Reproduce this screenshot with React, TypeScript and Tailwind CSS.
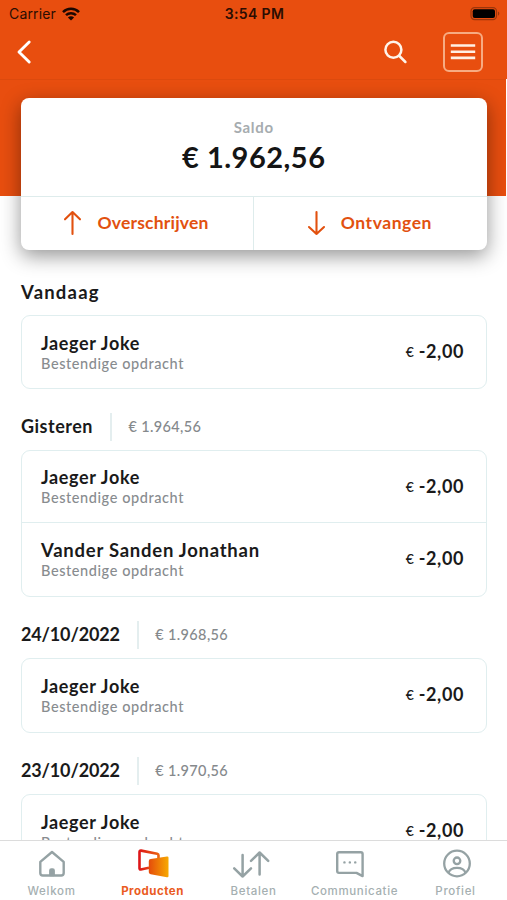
import React from "react";

type Transaction = { name: string; kind: string; amount: string; nameClass: string };
type Day = { label: string; balance?: string; heading: string; labelClass: string; items: Transaction[] };

const joke: Transaction = { name: "Jaeger Joke", kind: "Bestendige opdracht", amount: "-2,00", nameClass: "text-[18px] tracking-[0.65px]" };
const vander: Transaction = { name: "Vander Sanden Jonathan", kind: "Bestendige opdracht", amount: "-2,00", nameClass: "text-[18.5px] tracking-[0.75px]" };

const days: Day[] = [
  { label: "Vandaag", heading: "h-[44px]", labelClass: "text-[18.5px] tracking-[1.2px]", items: [joke] },
  { label: "Gisteren", balance: "€ 1.964,56", heading: "h-[46px]", labelClass: "text-[18px] tracking-[0.5px]", items: [joke, vander] },
  { label: "24/10/2022", balance: "€ 1.968,56", heading: "h-[47px]", labelClass: "text-[18px] tracking-[-0.15px]", items: [joke] },
  { label: "23/10/2022", balance: "€ 1.970,56", heading: "h-[47px]", labelClass: "text-[18px] tracking-[-0.15px]", items: [joke] },
];

function StatusBar() {
  return (
    <div className="grid h-[27px] grid-cols-3 items-center pl-[9px] pr-[7px] font-['Inter',sans-serif] text-[14px] text-[#2b0d02]">
      <div className="flex items-center gap-[6px]">
        <span className="tracking-[0.15px]">Carrier</span>
        <svg width="18" height="14" viewBox="0 0 18 14" fill="none" stroke="#1c0701" strokeWidth="2.5">
          <path d="M1 5.1C5.4.7 12.6.7 17 5.1" />
          <path d="M4 8.2c2.8-2.7 7.2-2.7 10 0" />
          <path d="M9 13.6 5.9 10.5c1.7-1.6 4.5-1.6 6.2 0Z" fill="#1c0701" stroke="none" />
        </svg>
      </div>
      <span className="text-center font-semibold tracking-[0.35px]">3:54 PM</span>
      <svg className="justify-self-end" width="31" height="14" viewBox="0 0 31 14">
        <rect x="2" y="0.6" width="25.5" height="12" rx="3.6" fill="none" stroke="#9c360b" strokeWidth="1.2" />
        <rect x="3.7" y="2.2" width="22.3" height="8.8" rx="2" fill="#000" />
        <path d="M29 4.6c1.8.7 1.8 3.5 0 4.2Z" fill="#9c360b" />
      </svg>
    </div>
  );
}

function Header() {
  return (
    <header className="h-[79px] shrink-0 bg-[#e84e0f]">
      <StatusBar />
      <div className="flex h-[50px] items-center pl-[16px] pr-[24px]">
        <svg width="16" height="26" viewBox="0 0 16 26" fill="none" stroke="#fff" strokeWidth="2.9" strokeLinecap="round" strokeLinejoin="round">
          <path d="M13.2 3 3 13 13.2 23" />
        </svg>
        <svg className="ml-auto" width="26" height="26" viewBox="0 0 26 26" fill="none" stroke="#fff4ea" strokeWidth="2.5" strokeLinecap="round">
          <circle cx="10.4" cy="10.7" r="8" />
          <path d="m16.4 17 6 6" />
        </svg>
        <div className="ml-[34px] flex h-[40px] w-[40px] items-center justify-center rounded-[6px] border-2 border-[#f7ab82]">
          <svg width="26" height="18" viewBox="0 0 26 18" stroke="#fff0e4" strokeWidth="2.6">
            <path d="M.8 2.5h24.4M.8 8.7h24.4M.8 14.9h24.4" />
          </svg>
        </div>
      </div>
    </header>
  );
}

function BalanceCard() {
  return (
    <div className="h-[117px] shrink-0 pr-[1.5px]">
      <div className="h-full border-t border-[#dc4a0e] bg-[#e84e0f] pl-[20.5px] pr-[18.5px] pt-[18.4px]">
        <div className="flex h-[151.6px] flex-col overflow-hidden rounded-[8px] bg-white shadow-[0_6px_20px_rgba(0,0,0,0.42)]">
          <div className="flex h-[98.4px] flex-col items-center border-b border-[#deecec] pt-[20px]">
            <span className="text-[15px] font-bold leading-[19px] tracking-[0.7px] text-[#a6acaf]">Saldo</span>
            <span className="mt-[2px] text-[29px] font-bold leading-[36px] tracking-[0.5px] text-[#151515]">€ 1.962,56</span>
          </div>
          <div className="grid flex-1 grid-cols-2 text-[17.5px] font-bold text-[#e2510f]">
            <div className="flex items-center border-r border-[#deecec] pl-[42px]">
              <Arrow />
              <span className="ml-[16px] tracking-[0.2px]">Overschrijven</span>
            </div>
            <div className="flex items-center pl-[53px]">
              <Arrow down />
              <span className="ml-[15px] tracking-[0.55px]">Ontvangen</span>
            </div>
          </div>
        </div>
      </div>
    </div>
  );
}

function Arrow({ down = false }: { down?: boolean }) {
  return (
    <svg width="19" height="26" viewBox="0 0 19 26" fill="none" stroke="currentColor" strokeWidth="2.1" strokeLinecap="round" strokeLinejoin="round">
      {down ? <path d="M9.5 2v22M2 17l7.5 7 7.5-7" /> : <path d="M9.5 24V2M2 9.3 9.5 2l7.5 7.3" />}
    </svg>
  );
}

function DaySection({ day }: { day: Day }) {
  return (
    <section className="mb-[14.7px]">
      <div className={"flex items-center " + day.heading}>
        <h2 className={"font-bold text-[#1a1a1a] " + day.labelClass}>{day.label}</h2>
        {day.balance && (
          <>
            <span className="ml-[17px] h-[28px] w-[2px] bg-[#e4eeef]" />
            <span className="ml-[16.5px] text-[14.5px] font-medium tracking-[0.35px] text-[#85898c]">{day.balance}</span>
          </>
        )}
      </div>
      <div className="divide-y divide-[#e0eeef] rounded-[9px] border-[1.5px] border-[#e0eeef]">
        {day.items.map((t) => (
          <div key={t.name} className="flex h-[72.3px] items-center justify-between pl-[19px] pr-[22px]">
            <div className="pt-px">
              <p className={"font-bold leading-[22px] text-[#1a1a1a] " + t.nameClass}>{t.name}</p>
              <p className="text-[14.5px] font-medium leading-[20px] tracking-[0.58px] text-[#888c8f]">{t.kind}</p>
            </div>
            <p className="flex items-center pb-px text-[#1a1a1a]">
              <span className="mr-[5px] text-[14px] font-medium">€</span>
              <span className="text-[18px] font-bold tracking-[0.6px]">{t.amount}</span>
            </p>
          </div>
        ))}
      </div>
    </section>
  );
}

function HomeIcon() {
  return (
    <svg width="32" height="32" viewBox="0 0 32 32" fill="none" stroke="#95a2a4" strokeWidth="2.4" strokeLinejoin="round">
      <path d="M4.3 14.8 16 5l11.7 9.8V26q0 2.5-2.5 2.5H6.8q-2.5 0-2.5-2.5Z" />
      <path d="M14.3 28v-4.5q0-1 1-1h1.4q1 0 1 1V28Z" fill="#95a2a4" />
    </svg>
  );
}

function ProductsIcon() {
  return (
    <svg width="34" height="32" viewBox="0 0 34 32" fill="none">
      <defs>
        <linearGradient id="front" x1="12" y1="20" x2="33" y2="20" gradientUnits="userSpaceOnUse">
          <stop stopColor="#e4480c" />
          <stop offset="1" stopColor="#f8ac00" />
        </linearGradient>
        <linearGradient id="back" x1="2" y1="10" x2="23" y2="10" gradientUnits="userSpaceOnUse">
          <stop stopColor="#dc1018" />
          <stop offset="1" stopColor="#ec6511" />
        </linearGradient>
      </defs>
      <path d="M13 20.8 4.8 22.5Q3.5 22.7 3.5 21.3V5q0-1.7 1.7-1.4l16 3.1q1.3.3 1.3 1.5v3" stroke="url(#back)" strokeWidth="2.6" />
      <path d="M12.8 14q0-1.8 1.9-2L31 9.4q1.5-.2 1.5 1.2v18.5q0 1.5-1.5 1.2l-16.3-3q-1.9-.4-1.9-2Z" fill="url(#front)" />
    </svg>
  );
}

function PayIcon() {
  return (
    <svg className="-ml-[6px]" width="40" height="32" viewBox="0 0 40 32" fill="none" stroke="#95a2a4" strokeWidth="2.5" strokeLinecap="round" strokeLinejoin="round">
      <path d="M11.6 8v21.5M3.2 21.3l8.4 8.2 8.4-8.2" />
      <path d="M28.6 27.5V5.5M20 13.8l8.6-8.3 8.6 8.3" />
    </svg>
  );
}

function ChatIcon() {
  return (
    <svg className="-ml-[9px]" width="32" height="32" viewBox="0 0 32 32" fill="none" stroke="#95a2a4" strokeWidth="2.4" strokeLinejoin="round">
      <path d="M5 5.2h21.8q1.8 0 1.8 1.8v22.1l-6.1-3.2H5q-1.8 0-1.8-1.8V7q0-1.8 1.8-1.8Z" />
      <path d="M10.4 15.4h.1M15.8 15.4h.1M21.2 15.4h.1" strokeLinecap="round" />
    </svg>
  );
}

function ProfileIcon() {
  return (
    <svg className="ml-[2px]" width="32" height="32" viewBox="0 0 32 32" fill="none" stroke="#95a2a4" strokeWidth="2.3">
      <circle cx="16" cy="16.5" r="12.8" />
      <circle cx="16" cy="13.8" r="3.3" />
      <path d="M7.5 25.9c1.2-3.6 4.4-5 8.5-5s7.3 1.4 8.5 5" />
    </svg>
  );
}

const tabs = [
  { label: "Welkom", icon: <HomeIcon />, text: "tracking-[0.7px]" },
  { label: "Producten", icon: <ProductsIcon />, text: "tracking-[0.5px]", active: true },
  { label: "Betalen", icon: <PayIcon />, text: "tracking-[0.65px]" },
  { label: "Communicatie", icon: <ChatIcon />, text: "tracking-[0.65px]" },
  { label: "Profiel", icon: <ProfileIcon />, text: "tracking-[0.7px]" },
];

export default function App() {
  return (
    <div className="flex h-[900px] w-[507px] flex-col overflow-hidden bg-white font-['Lato',sans-serif]">
      <Header />
      <BalanceCard />
      <main className="min-h-0 flex-1 overflow-hidden pl-[21px] pr-[20px] pt-[75px]">
        {days.map((d) => (
          <DaySection key={d.label} day={d} />
        ))}
      </main>
      <nav className="flex h-[60px] shrink-0 justify-center border-t border-[#dcdcdc] bg-white pt-[6px] font-['Inter',sans-serif]">
        {tabs.map((t) => (
          <div key={t.label} className="flex w-[101px] flex-col items-center">
            {t.icon}
            <span
              className={
                "mt-[4px] text-[11.5px] leading-[16px] " +
                t.text +
                (t.active ? " font-bold text-[#ea5b22]" : " font-medium text-[#a5afb1]")
              }
            >
              {t.label}
            </span>
          </div>
        ))}
      </nav>
    </div>
  );
}
